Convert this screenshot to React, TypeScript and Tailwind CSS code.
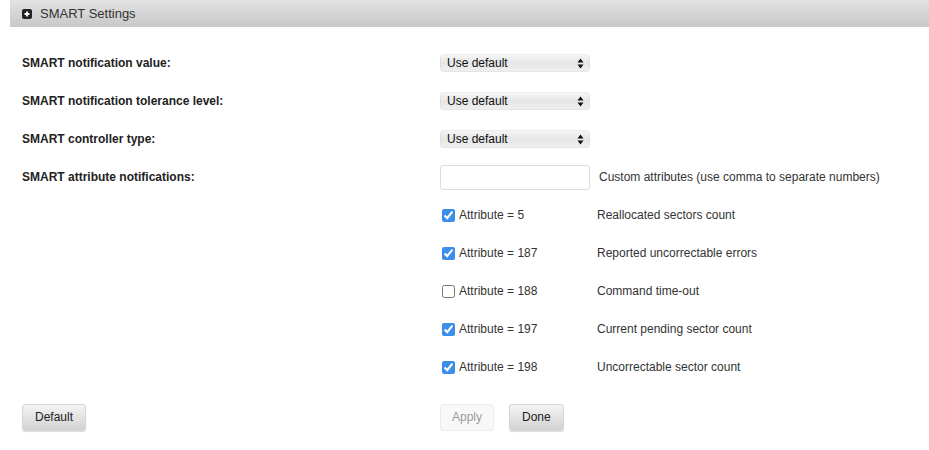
import { useState } from "react";

const selects = [
  "SMART notification value:",
  "SMART notification tolerance level:",
  "SMART controller type:",
];

const attributes = [
  { id: 5, label: "Reallocated sectors count", checked: true },
  { id: 187, label: "Reported uncorrectable errors", checked: true },
  { id: 188, label: "Command time-out", checked: false },
  { id: 197, label: "Current pending sector count", checked: true },
  { id: 198, label: "Uncorrectable sector count", checked: true },
];

function FakeSelect() {
  return (
    <div className="flex h-[18px] w-[150px] items-center justify-between rounded-[4px] bg-gradient-to-b from-[#f7f7f7] via-[#e6e6e6] to-[#f0f0f0] pl-[7px] pr-[6px] shadow-[inset_0_0_0_1px_rgba(0,0,0,0.04)]">
      <span className="text-[12px] text-[#111]">Use default</span>
      <svg width="7" height="11" viewBox="0 0 7 11">
        <path d="M3.5 0.5 L6.5 4.5 L0.5 4.5 Z" fill="#111" />
        <path d="M3.5 10.5 L6.5 6.5 L0.5 6.5 Z" fill="#111" />
      </svg>
    </div>
  );
}

function Button({ children, disabled, wide }: { children: string; disabled?: boolean; wide?: boolean }) {
  const pad = wide ? "px-[12px]" : "px-[11px]";
  return (
    <button
      disabled={disabled}
      className={
        disabled
          ? `h-[27px] rounded-[3px] border border-[#ececec] bg-[#f8f8f8] ${pad} text-[12px] text-[#9a9a9a]`
          : `h-[27px] rounded-[3px] border border-[#d6d6d6] bg-gradient-to-b from-[#f4f4f4] to-[#d2d2d2] ${pad} text-[12px] text-[#222] shadow-[0_1px_1px_rgba(0,0,0,0.15)]`
      }
    >
      {children}
    </button>
  );
}

export default function App() {
  const [checks, setChecks] = useState(attributes.map((a) => a.checked));

  return (
    <div className="h-[450px] w-[929px] bg-white pl-[10px] font-['Liberation_Sans',Arial,sans-serif] text-[12px] text-[#222]">
      <div className="flex h-[27px] items-center gap-[8px] bg-gradient-to-b from-[#e2e2e2] to-[#c8c8c8] pl-[12px] text-[13px] text-[#333]">
        <span className="flex h-[10px] w-[10px] items-center justify-center rounded-[2px] bg-[#222]">
          <svg width="8" height="8" viewBox="0 0 8 8">
            <path d="M4 1.5 V6.5 M1.5 4 H6.5" stroke="#fff" strokeWidth="1.8" />
          </svg>
        </span>
        SMART Settings
      </div>

      <div className="mt-[17px] pl-[12px]">
        {selects.map((label) => (
          <div key={label} className="flex h-[38px] items-center">
            <div className="w-[418px] font-bold">{label}</div>
            <FakeSelect />
          </div>
        ))}

        <div className="flex h-[38px] items-center">
          <div className="w-[418px] font-bold">SMART attribute notifications:</div>
          <input className="h-[25px] w-[150px] rounded-[3px] border border-[#dcdcdc] bg-white px-[4px] text-[12px] outline-none" />
          <span className="ml-[9px] text-[#333]">Custom attributes (use comma to separate numbers)</span>
        </div>

        {attributes.map((a, i) => (
          <div key={a.id} className="flex h-[38px] items-center">
            <div className="w-[418px]" />
            <label className="flex w-[157px] items-center pl-[2px]">
              <input
                type="checkbox"
                checked={checks[i]}
                onChange={() => setChecks(checks.map((c, j) => (j === i ? !c : c)))}
                className="h-[13px] w-[13px] accent-[#3b8eea]"
              />
              <span className="ml-[4px] text-[#333]">Attribute = {a.id}</span>
            </label>
            <span className="text-[#333]">{a.label}</span>
          </div>
        ))}

        <div className="mt-[12px] flex h-[38px] items-center">
          <div className="w-[418px]">
            <Button wide>Default</Button>
          </div>
          <div className="flex gap-[15px]">
            <Button disabled>Apply</Button>
            <Button wide>Done</Button>
          </div>
        </div>
      </div>
    </div>
  );
}
